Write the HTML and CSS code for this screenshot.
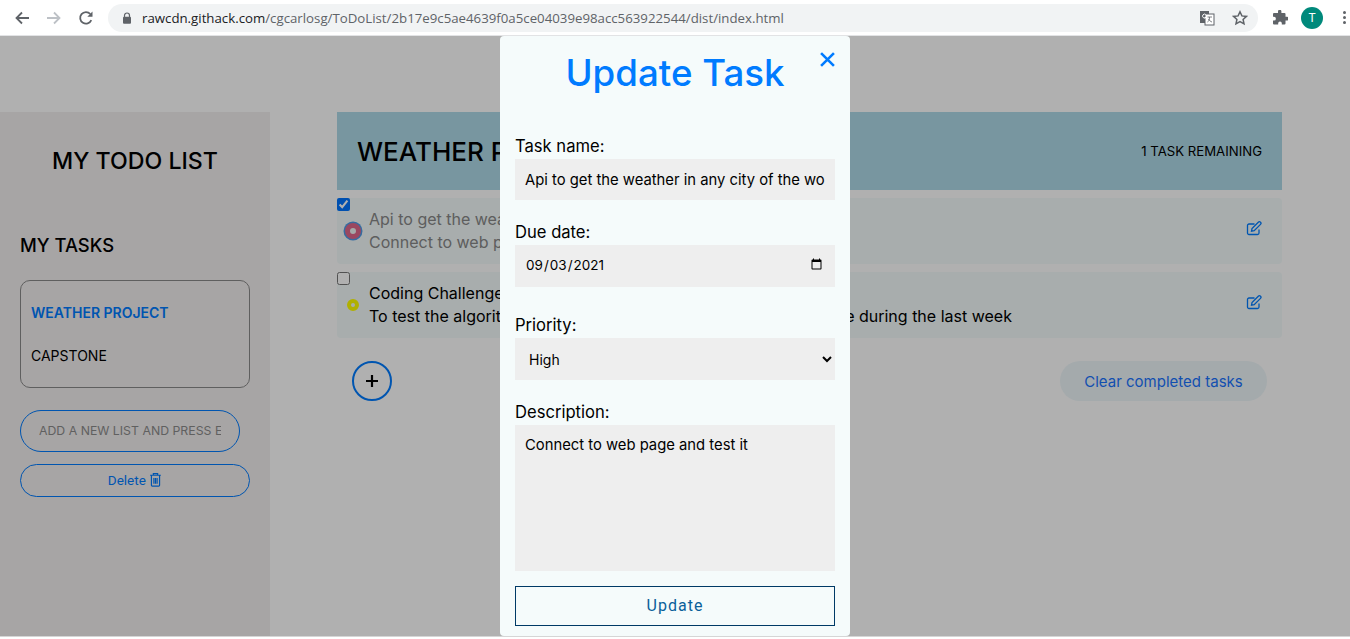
FILE: index.html
```html
<!DOCTYPE html>
<html>
<head lang="en">
    <meta charset="UTF-8">
    <title>My Todo List</title>
    <link rel="stylesheet" href="styles.css">
</head>
<body>
    <div class="toolbar">
        <svg class="nav-icon" viewBox="0 0 16 16"><path d="M15 8H3M8 2.500 2.500 8 8 13.500" fill="none" stroke="#5f6368" stroke-width="1.800"/></svg>
        <svg class="nav-icon" viewBox="0 0 16 16"><path d="M1 8h12M8 2.500 13.500 8 8 13.500" fill="none" stroke="#bdc1c6" stroke-width="1.800"/></svg>
        <svg class="nav-icon" viewBox="0 0 16 16"><path d="M13.300 10.200A5.800 5.800 0 1 1 12.300 4" fill="none" stroke="#5f6368" stroke-width="1.800"/><path d="M14.500 1.500v5.200H9.300z" fill="#5f6368"/></svg>
        <div class="omnibox">
            <svg class="lock" viewBox="0 0 10 12"><path d="M2.500 5V3.500a2.500 2.500 0 0 1 5 0V5" fill="none" stroke="#5f6368" stroke-width="1.200"/><rect x="1" y="4.800" width="8" height="7" rx="1" fill="#5f6368"/></svg>
            <span class="url"><span class="host">rawcdn.githack.com</span>/cgcarlosg/ToDoList/2b17e9c5ae4639f0a5ce04039e98acc563922544/dist/index.html</span>
            <svg class="translate" viewBox="0 0 16 16"><rect x="1" y="1" width="9" height="12" fill="#5f6368"/><rect x="6" y="4" width="9" height="11" fill="#fff" stroke="#5f6368"/><path d="M8.500 7h4.500M10.500 7c0 3-1 4.500-2 5M9.500 9c.8 1.500 2 2.500 3.500 3" fill="none" stroke="#5f6368" stroke-width=".8"/><path d="M6.800 4.500a2 2 0 1 0 .2 3H5.500" fill="none" stroke="#fff"/></svg>
            <svg class="star" viewBox="0 0 16 16"><path d="m8 1.800 1.900 4.100 4.500.5-3.300 3 .9 4.400L8 11.600l-4 2.200.9-4.400-3.300-3 4.500-.5z" fill="none" stroke="#5f6368" stroke-width="1.500"/></svg>
        </div>
        <svg class="puzzle" viewBox="0 0 16 16"><path d="M6 1.500a1.700 1.700 0 0 1 3.400 0V3h3.100a1 1 0 0 1 1 1v2.800H15a1.800 1.800 0 0 1 0 3.600h-1.500v3.100a1 1 0 0 1-1 1H9.800v-1.200a1.800 1.800 0 0 0-3.600 0v1.200H2a1 1 0 0 1-1-1V10.600h1a1.900 1.900 0 0 0 0-3.800H1V4a1 1 0 0 1 1-1h4z" fill="#5f6368"/></svg>
        <div class="avatar">T</div>
        <div class="menu-dots"><i></i><i></i><i></i></div>
    </div>

    <div class="page">
        <aside class="sidebar">
            <h1 class="brand">MY TODO LIST</h1>
            <h2 class="side-title">MY TASKS</h2>
            <ul class="lists">
                <li class="active">WEATHER PROJECT</li>
                <li>CAPSTONE</li>
            </ul>
            <input class="new-list" type="text" placeholder="ADD A NEW LIST AND PRESS ENTER">
            <button class="delete-list">Delete
                <svg viewBox="0 0 12 14"><path d="M1 3h10M4 3V1.500h4V3M2.200 3v9.300c0 .5.300.8.800.8h6c.5 0 .8-.3.8-.8V3M4.500 5.500v5.500M6 5.500v5.500M7.500 5.500v5.500" fill="none" stroke="#007bff" stroke-width="1.100"/></svg>
            </button>
        </aside>

        <main class="main">
            <div class="list-head">
                <h2>WEATHER PROJECT</h2>
                <span>1 TASK REMAINING</span>
            </div>

            <div class="task done">
                <input class="check" type="checkbox" checked>
                <span class="dot dot-high"></span>
                <div class="task-text">
                    <p>Api to get the weather in any city of the world</p>
                    <p>Connect to web page and test it</p>
                </div>
                <svg class="edit" viewBox="0 0 16 16"><path d="M13 9.500V13a1.500 1.500 0 0 1-1.500 1.500H3A1.500 1.500 0 0 1 1.500 13V5.500A1.500 1.500 0 0 1 3 4h5.500M6 8.500l-.5 2.700 2.700-.5 6.300-6.300a1.500 1.500 0 0 0-2.200-2.200z" fill="none" stroke="#007bff" stroke-width="1.300"/></svg>
            </div>
            <div class="task">
                <input class="check" type="checkbox">
                <span class="dot dot-mid"></span>
                <div class="task-text">
                    <p>Coding Challenge</p>
                    <p>To test the algorithms and data structures learned on the course during the last week</p>
                </div>
                <svg class="edit" viewBox="0 0 16 16"><path d="M13 9.500V13a1.500 1.500 0 0 1-1.500 1.500H3A1.500 1.500 0 0 1 1.500 13V5.500A1.500 1.500 0 0 1 3 4h5.500M6 8.500l-.5 2.700 2.700-.5 6.300-6.300a1.500 1.500 0 0 0-2.200-2.200z" fill="none" stroke="#007bff" stroke-width="1.300"/></svg>
            </div>

            <div class="task-actions">
                <button class="add-task">
                    <svg viewBox="0 0 12 12"><path d="M6 0v12M0 6h12" stroke="#000" stroke-width="2.200"/></svg>
                </button>
                <button class="clear-tasks">Clear completed tasks</button>
            </div>
        </main>
    </div>

    <div class="overlay">
        <form class="modal">
            <div class="modal-head">
                <h2>Update Task</h2>
                <svg class="close" viewBox="0 0 14 14"><path d="M1 1l12 12M13 1 1 13" stroke="#007bff" stroke-width="2.400"/></svg>
            </div>
            <label class="label-name">Task name:</label>
            <input class="field" type="text" value="Api to get the weather in any city of the world">
            <label>Due date:</label>
            <input class="field field-date" type="date" value="2021-09-03">
            <label class="label-priority">Priority:</label>
            <select class="field field-select"><option>High</option><option>Medium</option><option>Low</option></select>
            <label>Description:</label>
            <textarea class="field field-area">Connect to web page and test it</textarea>
            <button class="update" type="button">Update</button>
        </form>
    </div>
</body>
</html>
```

FILE: styles.css
```css
*{
    margin: 0;
    padding: 0;
    box-sizing: border-box;
}
html,body{
    height: 100%;
    overflow: hidden;
}
body{
    font-family: Inter, "Open Sans", sans-serif;
    background: #fff;
    color: #000;
    position: relative;
}
ul{
    list-style: none;
}

/* browser bar */
.toolbar{
    height: 36px;
    display: flex;
    align-items: center;
    padding: 0 0 0 14px;
    background: #fff;
    border-bottom: 1px solid #e2e3e5;
}
.nav-icon{
    width: 16px;
    height: 16px;
    margin-right: 16px;
}
.omnibox{
    width: 1150px;
    height: 28px;
    margin-left: -2px;
    padding: 0 10px 0 14px;
    display: flex;
    align-items: center;
    background: #f1f3f4;
    border-radius: 14px;
}
.lock{
    width: 10px;
    height: 12px;
    margin-right: 10px;
}
.url{
    flex: 1;
    font: 13.250px "Open Sans", sans-serif;
    color: #5f6368;
    white-space: nowrap;
}
.host{
    color: #202124;
}
.translate{
    width: 16px;
    height: 16px;
    margin-right: 17px;
}
.star{
    width: 16px;
    height: 16px;
}
.puzzle{
    width: 16px;
    height: 16px;
    margin-left: 14px;
}
.avatar{
    width: 22px;
    height: 22px;
    margin-left: 13px;
    border-radius: 50%;
    background: #00897b;
    color: #fff;
    font: 12px/22px Roboto, sans-serif;
    text-align: center;
}
.menu-dots{
    margin-left: 20px;
    display: flex;
    flex-direction: column;
    gap: 2px;
}
.menu-dots i{
    width: 3px;
    height: 3px;
    border-radius: 50%;
    background: #5f6368;
}

/* page under the modal */
.page{
    height: 601px;
    padding-top: 76px;
    display: flex;
    background: #fff;
}
.sidebar{
    width: 270px;
    padding: 0 20px;
    background: #f2efef;
}
.brand{
    margin-top: 33px;
    font-size: 23.200px;
    line-height: 32px;
    font-weight: 500;
    text-align: center;
}
.side-title{
    margin-top: 55px;
    font-size: 18.400px;
    line-height: 26px;
    font-weight: 500;
}
.lists{
    margin-top: 22px;
    height: 108px;
    padding: 10px 10px;
    border: 1px solid #8a8a8a;
    border-radius: 10px;
    font-size: 14px;
    line-height: 43px;
}
.lists .active{
    color: #007bff;
    font-weight: 600;
}
.new-list{
    display: block;
    width: 220px;
    height: 42px;
    margin-top: 22px;
    padding: 0 18px 2px;
    border: 1px solid #007bff;
    border-radius: 21px;
    background: transparent;
    font: 12.300px Inter, sans-serif;
}
.new-list::placeholder{
    color: #8c8c8c;
}
.delete-list{
    display: block;
    width: 230px;
    height: 33px;
    margin-top: 12px;
    padding-bottom: 2px;
    border: 1px solid #007bff;
    border-radius: 17px;
    background: transparent;
    color: #007bff;
    font: 13.500px Roboto, sans-serif;
}
.delete-list svg{
    width: 13px;
    height: 15px;
    vertical-align: -2px;
}
.main{
    width: 945px;
    margin-left: 67px;
}
.list-head{
    height: 78px;
    padding: 0 20px;
    display: flex;
    align-items: center;
    justify-content: space-between;
    background: #afdae8;
}
.list-head h2{
    font-size: 26px;
    font-weight: 500;
}
.list-head span{
    font-size: 13.200px;
}
.task{
    position: relative;
    height: 66px;
    margin-top: 8px;
    padding: 0 20px 0 32px;
    display: flex;
    align-items: center;
    background: #f3fbfb;
    border-radius: 4px;
    font-size: 16px;
    line-height: 23px;
}
.done .task-text{
    color: #888;
}
.check{
    position: absolute;
    left: 0;
    top: 0;
    width: 13px;
    height: 13px;
    accent-color: #0075ff;
}
.dot{
    width: 16px;
    height: 16px;
    border-radius: 50%;
    margin-left: -24px;
    margin-right: 8px;
    flex: none;
}
.dot-high{
    background: #f0f6f6;
    border: 5px solid #e0688c;
    box-shadow: 0 0 0 1.500px #4f9be8;
}
.dot-mid{
    width: 12px;
    height: 12px;
    margin-left: -22px;
    margin-right: 10px;
    border: 4px solid #ffff00;
    background: #f3fbfb;
}
.task-text{
    flex: 1;
}
.edit{
    width: 16px;
    height: 16px;
    margin-top: -6px;
}
.task-actions{
    margin-top: 23px;
    padding: 0 15px;
    display: flex;
    align-items: center;
    justify-content: space-between;
}
.add-task{
    width: 40px;
    height: 40px;
    border: 2px solid #007bff;
    border-radius: 50%;
    background: transparent;
    display: flex;
    align-items: center;
    justify-content: center;
}
.add-task svg{
    width: 12px;
    height: 12px;
}
.clear-tasks{
    width: 207px;
    height: 40px;
    border: 0;
    border-radius: 20px;
    background: #eef7fa;
    color: #1a73ff;
    font: 15px Inter, sans-serif;
}

/* modal */
.overlay{
    position: absolute;
    left: 0;
    right: 0;
    top: 36px;
    bottom: 2px;
    display: flex;
    justify-content: center;
    background: rgba(0, 0, 0, .31);
    border-bottom: 1px solid #d6d6d6;
}
.modal{
    width: 350px;
    padding: 0 15px;
    background: #f5fbfb;
    border-radius: 4px;
    display: flex;
    flex-direction: column;
}
.modal-head{
    position: relative;
    height: 74px;
    text-align: center;
}
.modal-head h2{
    padding-top: 12px;
    font-size: 36.700px;
    line-height: 50px;
    font-weight: 500;
    color: #007bff;
}
.close{
    position: absolute;
    right: 0;
    top: 16px;
    width: 15px;
    height: 15px;
}
.modal label{
    font-size: 16.600px;
    line-height: 24px;
    height: 25px;
    margin-top: 20px;
}
.modal .label-name{
    margin-top: 24px;
}
.modal .label-priority{
    margin-top: 26px;
}
.field{
    width: 320px;
    border: 0;
    background: #eee;
    color: #000;
    padding: 0 10px;
    font: 14.800px Inter, sans-serif;
    flex: none;
}
input.field{
    height: 41px;
}
input.field-date{
    height: 42px;
    padding-bottom: 2px;
    font-size: 13.500px;
}
.field-select{
    height: 42px;
    padding: 0 10px;
    font-size: 14px;
}
.field-area{
    height: 146px;
    padding: 10px;
    line-height: 20px;
    resize: none;
}
.update{
    height: 40px;
    margin-top: 15px;
    padding-bottom: 2px;
    border: 1px solid #003a66;
    background: transparent;
    color: #0a5f9a;
    font: 16px Roboto, sans-serif;
    letter-spacing: 1px;
    flex: none;
}
```
